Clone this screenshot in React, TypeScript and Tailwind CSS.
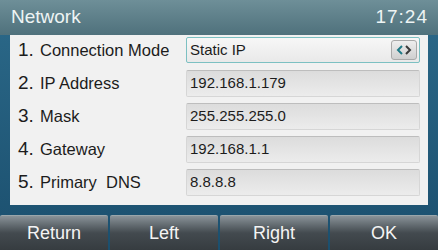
import React from 'react';

const rows = [
  { n: '1.', label: 'Connection Mode', value: 'Static IP', select: true },
  { n: '2.', label: 'IP Address', value: '192.168.1.179' },
  { n: '3.', label: 'Mask', value: '255.255.255.0' },
  { n: '4.', label: 'Gateway', value: '192.168.1.1' },
  { n: '5.', label: 'Primary  DNS', value: '8.8.8.8' },
];

const keys = ['Return', 'Left', 'Right', 'OK'];

export default function App() {
  return (
    <div
      className="w-[438px] h-[250px] flex flex-col overflow-hidden bg-gradient-to-b from-[#2c6a8a] to-[#1b4f6e]"
      style={{ fontFamily: '"Liberation Sans", Arial, sans-serif' }}
    >
      {/* title bar */}
      <div className="h-[35px] flex items-center justify-between pl-[11px] pr-[10px] bg-gradient-to-b from-[#6e8f98] to-[#4f717c]">
        <span className="text-[19px] text-[#eef4f4]">Network</span>
        <span className="text-[19px] text-[#eef4f4] tracking-[1px]">17:24</span>
      </div>

      {/* settings panel */}
      <div className="mx-[10px] h-[170px] bg-[#f1f1f1] pt-[2px] pl-[8px] pr-[8px] flex flex-col">
        {rows.map((r) => (
          <div key={r.n} className="h-[33px] flex items-start">
            <div className="w-[168px] h-[27px] flex items-center text-[#1c1c1c]">
              <span className="text-[19px] w-[22px]">{r.n}</span>
              <span className="text-[16.5px] whitespace-pre">{r.label}</span>
            </div>
            {r.select ? (
              <div className="flex-1 h-[26px] flex items-center justify-between pl-[3px] pr-[2px] border border-[#7cc0c2] rounded-[2px] bg-gradient-to-b from-[#f7f7f7] to-[#e9e9e9]">
                <span className="text-[15px] text-[#1c1c1c]">{r.value}</span>
                <div className="w-[26px] h-[20px] flex items-center justify-center border border-[#a9a9a9] rounded-[3px] bg-gradient-to-b from-[#eeeeee] to-[#cfcfcf]">
                  <svg width="16" height="10" viewBox="0 0 16 10">
                    <path d="M6 1 L2 5 L6 9" fill="none" stroke="#1f7a86" strokeWidth="2" />
                    <path d="M10 1 L14 5 L10 9" fill="none" stroke="#3a3a3a" strokeWidth="2" />
                  </svg>
                </div>
              </div>
            ) : (
              <div className="flex-1 h-[27px] flex items-center pl-[3px] border border-[#d6d6d6] border-t-[#bdbdbd] rounded-[2px] bg-gradient-to-b from-[#dcdcdc] to-[#ececec]">
                <span className="text-[15px] text-[#1c1c1c]">{r.value}</span>
              </div>
            )}
          </div>
        ))}
      </div>

      {/* soft keys */}
      <div className="mt-[10px] h-[35px] flex gap-[2px]">
        {keys.map((k) => (
          <div
            key={k}
            className="flex-1 flex items-center justify-center border-t border-[#9aa6ab] rounded-t-[2px] bg-gradient-to-b from-[#8a9399] via-[#434a4f] to-[#363c40] text-[18px] text-[#f4f4f4]"
          >
            {k}
          </div>
        ))}
      </div>
    </div>
  );
}
